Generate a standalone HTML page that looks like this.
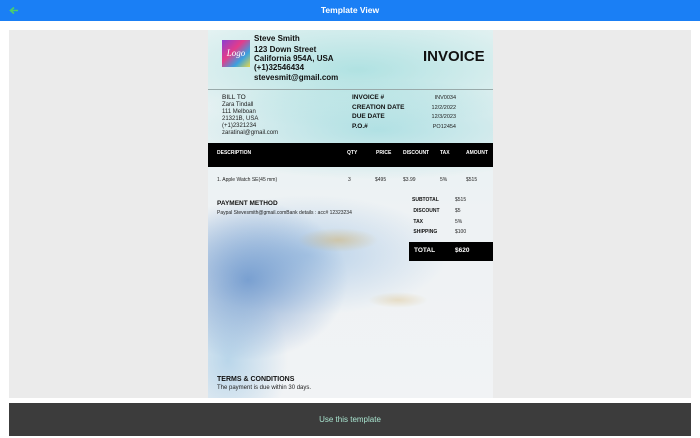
<!DOCTYPE html>
<html><head><style>
*{margin:0;padding:0;box-sizing:border-box}
body{width:700px;height:438px;background:#fff;font-family:"Liberation Sans",sans-serif;position:relative;overflow:hidden}
.a{position:absolute;white-space:nowrap}
.hdr{left:0;top:0;width:700px;height:21px;background:#1a7ff5;color:#fff;font-size:8.5px;font-weight:bold;text-align:center;line-height:21px}
.panel{left:9px;top:30px;width:682px;height:368px;background:#ebebeb}
.paper{left:208px;top:30px;width:285px;height:368px;overflow:hidden;
background:
radial-gradient(ellipse 40px 12px at 130px 210px,rgba(210,170,90,.45),transparent),
radial-gradient(ellipse 30px 8px at 190px 270px,rgba(210,170,90,.3),transparent),
radial-gradient(ellipse 100px 80px at 40px 250px,rgba(80,130,195,.7),transparent),
radial-gradient(ellipse 140px 60px at 100px 225px,rgba(120,170,220,.45),transparent),
radial-gradient(ellipse 60px 80px at 20px 330px,rgba(140,190,225,.55),transparent),
radial-gradient(ellipse 200px 60px at 150px 40px,rgba(140,215,215,.6),transparent),
radial-gradient(ellipse 200px 50px at 170px 100px,rgba(130,210,215,.55),transparent),
linear-gradient(#e4f2f2,#eef2f4 50%,#f1f3f5)}
.b{font-weight:bold;color:#111}
.s{font-size:5.5px;color:#222}
.bot{left:9px;top:403px;width:682px;height:33px;background:#3c3c3c;color:#a9e4cf;font-size:8px;text-align:center;line-height:33px}
</style></head><body>
<div class="a hdr">Template View</div>
<svg class="a" style="left:9px;top:6px" width="10" height="9" viewBox="0 0 10 9"><path d="M9 4.5H2M5 1.5L1.5 4.5 5 7.5" stroke="#4ccf6a" stroke-width="1.6" fill="none"/></svg>
<div class="a panel"></div>
<div class="a paper">
 <div class="a" style="left:14px;top:10px;width:28px;height:27px;background:linear-gradient(135deg,#8a3fd0,#e43c8a 40%,#3aa0e0 70%,#e6d84a);color:#fff;font-size:9px;font-style:italic;font-family:'Liberation Serif',serif;text-align:center;line-height:27px">Logo</div>
 <div class="a b" style="left:46px;top:4px;font-size:8px">Steve Smith</div>
 <div class="a b" style="left:46px;top:15px;font-size:8px;line-height:9.2px">123 Down Street<br>California 954A, USA<br>(+1)32546434<br>stevesmit@gmail.com</div>
 <div class="a b" style="left:215px;top:18px;font-size:15px">INVOICE</div>
 <div class="a" style="left:0;top:59px;width:285px;height:1px;background:#9aa"></div>
 <div class="a" style="left:14px;top:64px;font-size:6.5px;color:#111">BILL TO</div>
 <div class="a s" style="left:14px;top:72px;line-height:7px;font-size:6px">Zara Tindall<br>111 Melboan<br>21321B, USA<br>(+1)2321234<br>zaratinal@gmail.com</div>
 <div class="a b" style="left:144px;top:63px;font-size:6.5px;line-height:9.5px">INVOICE #<br>CREATION DATE<br>DUE DATE<br>P.O.#</div>
 <div class="a s" style="left:218px;top:64px;line-height:9.5px;text-align:right;width:30px">INV0034<br>12/2/2022<br>12/3/2023<br>PO12454</div>
 <div class="a" style="left:0;top:113px;width:285px;height:24px;background:#000"></div>
 <div class="a" style="left:9px;top:120px;font-size:5px;font-weight:bold;color:#fff">DESCRIPTION</div>
 <div class="a" style="left:139px;top:120px;font-size:5px;font-weight:bold;color:#fff">QTY</div>
 <div class="a" style="left:168px;top:120px;font-size:5px;font-weight:bold;color:#fff">PRICE</div>
 <div class="a" style="left:195px;top:120px;font-size:5px;font-weight:bold;color:#fff">DISCOUNT</div>
 <div class="a" style="left:232px;top:120px;font-size:5px;font-weight:bold;color:#fff">TAX</div>
 <div class="a" style="left:258px;top:120px;font-size:5px;font-weight:bold;color:#fff">AMOUNT</div>
 <div class="a s" style="left:9px;top:147px;font-size:5px">1. Apple Watch SE(45 mm)</div>
 <div class="a s" style="left:140px;top:147px;font-size:5px">3</div>
 <div class="a s" style="left:167px;top:147px;font-size:5px">$495</div>
 <div class="a s" style="left:195px;top:147px;font-size:5px">$3.99</div>
 <div class="a s" style="left:232px;top:147px;font-size:5px">5%</div>
 <div class="a s" style="left:258px;top:147px;font-size:5px">$515</div>
 <div class="a b" style="left:9px;top:170px;font-size:6.5px">PAYMENT METHOD</div>
 <div class="a s" style="left:9px;top:180px;font-size:5px">Paypal Stevesmith@gmail.comBank details : acc# 12323234</div>
 <div class="a b" style="left:204px;top:165px;font-size:5px;line-height:10.8px">SUBTOTAL<br>&nbsp;DISCOUNT<br>&nbsp;TAX<br>&nbsp;SHIPPING</div>
 <div class="a s" style="left:247px;top:165px;font-size:5px;line-height:10.8px">$515<br>$5<br>5%<br>$100</div>
 <div class="a" style="left:201px;top:212px;width:84px;height:19px;background:#000"></div>
 <div class="a" style="left:206px;top:217px;font-size:6.5px;font-weight:bold;color:#fff">TOTAL</div>
 <div class="a" style="left:247px;top:217px;font-size:6.5px;font-weight:bold;color:#fff">$620</div>
 <div class="a b" style="left:9px;top:346px;font-size:7px">TERMS &amp; CONDITIONS</div>
 <div class="a" style="left:9px;top:355px;font-size:6px;color:#222">The payment is due within 30 days.</div>
</div>
<div class="a bot">Use this template</div>
</body></html>
